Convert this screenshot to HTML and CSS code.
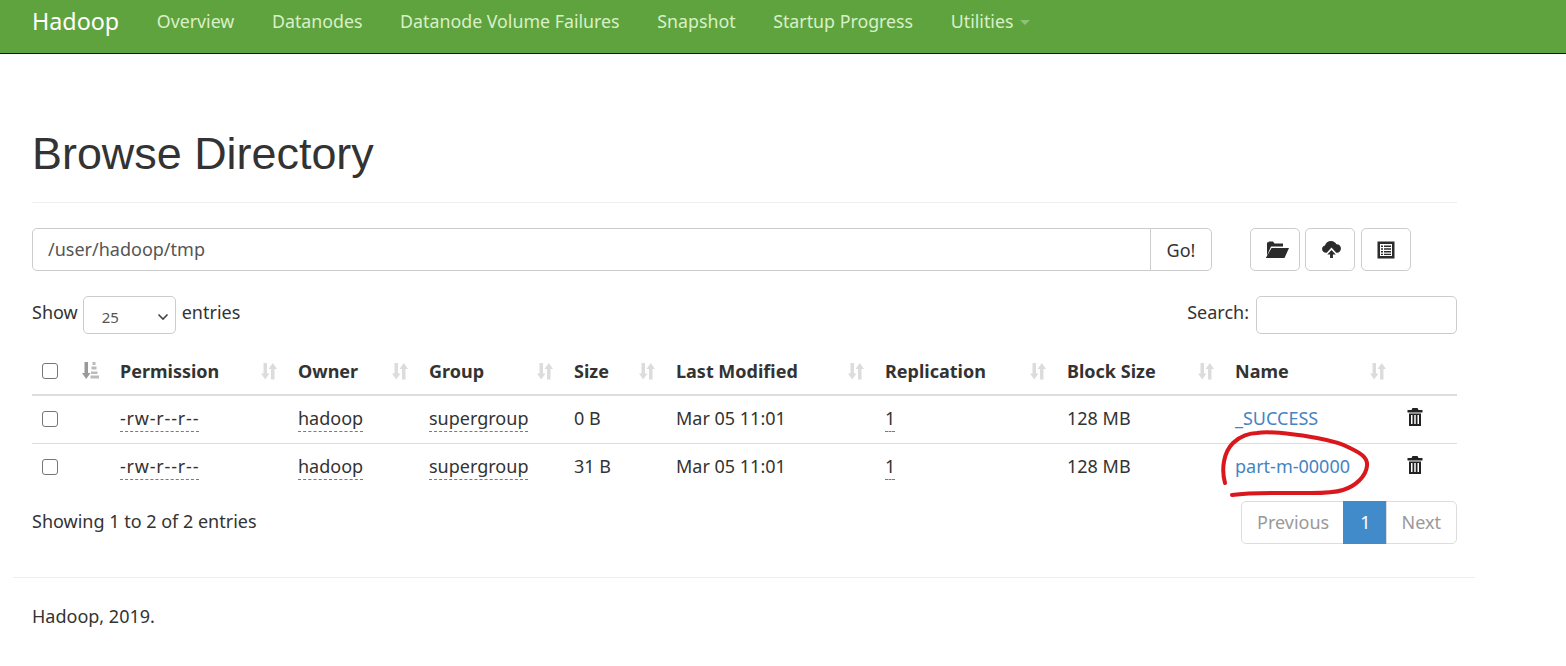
FILE: index.html
```html
<!DOCTYPE html>
<html lang="en">
<head>
<meta charset="utf-8">
<title>Browse Directory</title>
<link rel="stylesheet" href="styles.css">
</head>
<body>
<nav class="navbar">
  <a class="brand">Hadoop</a>
  <a class="nav-link">Overview</a>
  <a class="nav-link">Datanodes</a>
  <a class="nav-link">Datanode Volume Failures</a>
  <a class="nav-link">Snapshot</a>
  <a class="nav-link">Startup Progress</a>
  <a class="nav-link">Utilities<span class="caret"></span></a>
</nav>
<main class="container">
  <h1 class="title">Browse Directory</h1>
  <div class="toolbar">
    <div class="path-group">
      <div class="path-input">/user/hadoop/tmp</div>
      <button class="go">Go!</button>
    </div>
    <div class="tools">
      <button class="tool"><svg class="ico-folder" width="24" height="18" viewBox="0 0 24 18"><path fill="#2b2b2b" d="M2 1.500h1l1-1h4l1.500 2H18v3H6L2 14.500zM6.500 7H24L19.500 17H.8z"/></svg></button>
      <button class="tool"><svg class="ico-cloud" width="19" height="17" viewBox="0 0 20 18"><path fill="#2b2b2b" d="M4.500 12.500C2 12.500 0 10.800 0 8.500c0-1.900 1.300-3.400 3.100-3.700C3.700 2 6.400 0 9.500 0c2.600 0 4.800 1.400 5.800 3.500 2.700-.1 4.700 2 4.700 4.500 0 2.400-1.800 4.500-4.200 4.500H15L10 7 5 12.500zM10 9.500l4.500 4.800h-3V18h-3v-3.700h-3z"/></svg></button>
      <button class="tool tool-last"><svg width="18" height="18" viewBox="0 0 18 18"><path fill="#2b2b2b" fill-rule="evenodd" d="M.5.500h17v17H.5zM3 3v12h12V3zM4 4.500h2V6H4zM7 4.500h7V6H7zM4 7.300h2v1.500H4zM7 7.300h7v1.500H7zM4 10h2v1.500H4zM7 10h7v1.500H7zM4 12.700h2v1.300H4zM7 12.700h7v1.300H7z"/></svg></button>
    </div>
  </div>
  <div class="controls">
    <div class="length">Show <span class="select">25<svg width="12" height="8" viewBox="0 0 12 8"><path d="M1.500 1.500 6 6l4.500-4.500" fill="none" stroke="#444" stroke-width="1.600"/></svg></span> entries</div>
    <div class="search"><span class="search-label">Search:</span> <span class="search-box"></span></div>
  </div>
  <table class="files">
    <colgroup>
      <col class="c-check"><col class="c-sort"><col class="c-perm"><col class="c-owner"><col class="c-group"><col class="c-size"><col class="c-mod"><col class="c-rep"><col class="c-block"><col class="c-name"><col class="c-del">
    </colgroup>
    <thead>
      <tr>
        <th><span class="check"></span></th>
        <th><svg class="sort-active" width="19" height="18" viewBox="0 0 18 18"><path fill="#999" d="M3 0h3.500v11H9L4.700 17 .5 11H3z"/><path fill="#bbb" d="M11 0h3v3h-3zM10 4.500h5v3h-5zM9.500 9.500h6.500v2.500H9.500zM9 13.500h8.500V16.500H9z"/></svg></th>
        <th><span class="th-in">Permission<svg class="sort" width="18" height="18" viewBox="0 0 18 18"><use href="#updown"/></svg></span></th>
        <th><span class="th-in">Owner<svg class="sort" width="18" height="18" viewBox="0 0 18 18"><use href="#updown"/></svg></span></th>
        <th><span class="th-in">Group<svg class="sort" width="18" height="18" viewBox="0 0 18 18"><use href="#updown"/></svg></span></th>
        <th><span class="th-in">Size<svg class="sort" width="18" height="18" viewBox="0 0 18 18"><use href="#updown"/></svg></span></th>
        <th><span class="th-in">Last Modified<svg class="sort" width="18" height="18" viewBox="0 0 18 18"><use href="#updown"/></svg></span></th>
        <th><span class="th-in">Replication<svg class="sort" width="18" height="18" viewBox="0 0 18 18"><use href="#updown"/></svg></span></th>
        <th><span class="th-in">Block Size<svg class="sort" width="18" height="18" viewBox="0 0 18 18"><use href="#updown"/></svg></span></th>
        <th><span class="th-in">Name<svg class="sort" width="18" height="18" viewBox="0 0 18 18"><use href="#updown"/></svg></span></th>
        <th></th>
      </tr>
    </thead>
    <tbody>
      <tr>
        <td><span class="check"></span></td><td></td>
        <td><span class="dotted perm">-rw-r--r--</span></td>
        <td><span class="dotted">hadoop</span></td>
        <td><span class="dotted">supergroup</span></td>
        <td>0 B</td>
        <td>Mar 05 11:01</td>
        <td><span class="dotted">1</span></td>
        <td>128 MB</td>
        <td><a class="file">_SUCCESS</a></td>
        <td class="del"><svg width="16" height="20" viewBox="0 0 16 20"><use href="#trash"/></svg></td>
      </tr>
      <tr>
        <td><span class="check"></span></td><td></td>
        <td><span class="dotted perm">-rw-r--r--</span></td>
        <td><span class="dotted">hadoop</span></td>
        <td><span class="dotted">supergroup</span></td>
        <td>31 B</td>
        <td>Mar 05 11:01</td>
        <td><span class="dotted">1</span></td>
        <td>128 MB</td>
        <td><a class="file">part-m-00000</a></td>
        <td class="del"><svg width="16" height="20" viewBox="0 0 16 20"><use href="#trash"/></svg></td>
      </tr>
    </tbody>
  </table>
  <div class="table-foot">
    <div>Showing 1 to 2 of 2 entries</div>
    <div class="pager"><span class="page muted">Previous</span><span class="page current">1</span><span class="page muted">Next</span></div>
  </div>
</main>
<hr class="foot-rule">
<footer class="footer">Hadoop, 2019.</footer>
<svg class="annotation" width="170" height="80" viewBox="0 0 170 80"><path d="M7 55C3 40 6 24 15 15 22 8 32 5 39 5 50 3 70 5 99 10c16 3 26 6 33 10 10 5 18 9 17 18-1 10-11 20-24 24-13 4-30 3-43 3-22 0-47-1-68 2" fill="none" stroke="#d9171c" stroke-width="4" stroke-linecap="round" stroke-linejoin="round"/></svg>
<svg class="defs" width="0" height="0">
  <symbol id="updown" viewBox="0 0 18 18"><path fill="#dcdcdc" d="M3.500 1H7v10.500h2.500L5.200 17.500 1 11.500h2.500zM14.500 7h2.500l-4.200-6-4.300 6H11v10.500h3.500z"/></symbol>
  <symbol id="trash" viewBox="0 0 16 20"><path fill="#222" fill-rule="evenodd" d="M5.500 1h5l1 2H15.500v2.500H.5V3H4.500zM2 6.500h12V19H2zM4 8v9h1.500V8zM7.250 8v9h1.500V8zM10.500 8v9H12V8z"/></symbol>
</svg>
</body>
</html>
```
FILE: styles.css
```css
* { box-sizing: border-box; }
html, body { margin: 0; padding: 0; }
body {
  position: relative;
  background: #fff;
  color: #333;
  font-family: "Noto Sans", "Open Sans", sans-serif;
  font-size: 18px;
  line-height: 26px;
  height: 666px;
  overflow: hidden;
}
.navbar {
  display: flex;
  align-items: center;
  height: 54px;
  padding: 0 32px 12px;
  gap: 37.600px;
  background: #5fa33e;
  border-bottom: 1px solid #111;
  color: #d9f0c8;
}
.brand { color: #fff; font-size: 23.300px; }
.nav-link { font-size: 17.800px; white-space: nowrap; }
.caret {
  display: inline-block;
  margin-left: 7px;
  vertical-align: middle;
  border-top: 5px solid #8fc276;
  border-left: 5px solid transparent;
  border-right: 5px solid transparent;
}
.container { padding: 0 109px 0 32px; }
.title {
  margin: 0;
  padding: 73px 0 22px;
  font-family: "Liberation Sans", Arial, sans-serif;
  font-size: 44.900px;
  font-weight: 400;
  line-height: 53px;
  color: #333;
  border-bottom: 1px solid #eee;
}
.toolbar { display: flex; margin-top: 25px; }
.path-group { display: flex; width: 1180px; height: 43px; }
.path-input {
  flex: 1;
  padding: 0 15px;
  line-height: 41px;
  border: 1px solid #ccc;
  border-radius: 5px 0 0 5px;
  color: #555;
}
.go {
  width: 62px;
  margin-left: -1px;
  background: #fff;
  border: 1px solid #ccc;
  border-radius: 0 5px 5px 0;
  color: #333;
  font: inherit;
  padding: 0;
}
.tools { display: flex; gap: 5px; margin-left: 38px; }
.tool {
  display: flex;
  align-items: center;
  justify-content: center;
  width: 50px;
  height: 43px;
  padding: 0;
  background: #fff;
  border: 1px solid #ccc;
  border-radius: 5px;
}
.tool-last { margin-left: 1px; }
.ico-folder { margin-left: 4px; }
.ico-cloud { margin-left: 2px; }
.controls {
  display: flex;
  justify-content: space-between;
  align-items: center;
  margin-top: 25px;
  height: 38px;
}
.length { display: flex; align-items: center; gap: 5px; margin-top: -6px; height: 38px; }
.select {
  display: flex;
  align-items: center;
  justify-content: space-between;
  width: 93px;
  height: 38px;
  padding: 3px 6px 0 18px;
  margin: 6px 1px 0 0;
  border: 1px solid #ccc;
  border-radius: 5px;
  font-size: 15px;
  color: #555;
}
.search { display: flex; align-items: center; gap: 7px; }
.search-label { margin-top: -6px; }
.search-box {
  display: block;
  width: 201px;
  height: 38px;
  border: 1px solid #ccc;
  border-radius: 5px;
}
.files {
  width: 1425px;
  margin-top: 13px;
  border-collapse: collapse;
  table-layout: fixed;
}
.c-check { width: 38px; }
.c-sort { width: 39px; }
.c-perm { width: 178px; }
.c-owner { width: 131px; }
.c-group { width: 145px; }
.c-size { width: 102px; }
.c-mod { width: 209px; }
.c-rep { width: 182px; }
.c-block { width: 168px; }
.c-name { width: 172px; }
.c-del { width: 61px; }
.files th {
  height: 48px;
  padding: 0 11px;
  text-align: left;
  font-weight: 700;
  border-bottom: 2px solid #ddd;
  font-size: 18px;
}
.files td {
  height: 48px;
  padding: 0 11px 2px;
  white-space: nowrap;
}
.files td .check { margin-top: 2px; }
.files tbody tr:first-child td { border-bottom: 1px solid #ddd; }
.th-in { display: flex; align-items: center; justify-content: space-between; margin-right: -2px; }
.sort { flex: none; }
.sort-active { display: block; }
.check {
  display: block;
  width: 16px;
  height: 16px;
  margin-left: -1px;
  border: 1px solid #767676;
  border-radius: 3px;
  background: #fff;
}
.dotted { border-bottom: 1px dashed #1c9ac8; padding-bottom: 1px; }
.perm { letter-spacing: 0.800px; }
.file { color: #4584c2; }
.del { padding-left: 0; }
.del svg { display: block; margin: -2px 0 0 0; }
.table-foot {
  display: flex;
  justify-content: space-between;
  align-items: flex-start;
  margin-top: 10px;
}
.table-foot > div:first-child { margin-top: 7px; }
.pager { display: flex; height: 43px; }
.page {
  display: block;
  padding: 0 15px;
  line-height: 41px;
  border: 1px solid #ddd;
  margin-left: -1px;
}
.page:first-child { border-radius: 5px 0 0 5px; padding-right: 14px; }
.page:last-child { border-radius: 0 5px 5px 0; }
.page.current { padding-left: 16px; }
.muted { color: #999; }
.current { background: #428bca; border-color: #428bca; color: #fff; }
.foot-rule {
  margin: 33px 91px 0 13px;
  border: 0;
  border-top: 1px solid #eee;
}
.footer { padding: 25px 0 0 32px; }
.annotation { position: absolute; left: 1218px; top: 428px; pointer-events: none; }
.defs { position: absolute; }
```
